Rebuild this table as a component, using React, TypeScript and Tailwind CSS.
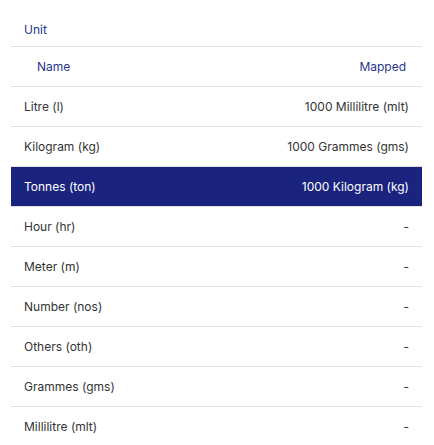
import React from "react";

const rows = [
  { name: "Litre (l)", mapped: "1000 Millilitre (mlt)" },
  { name: "Kilogram (kg)", mapped: "1000 Grammes (gms)" },
  { name: "Tonnes (ton)", mapped: "1000 Kilogram (kg)", active: true },
  { name: "Hour (hr)", mapped: "-" },
  { name: "Meter (m)", mapped: "-" },
  { name: "Number (nos)", mapped: "-" },
  { name: "Others (oth)", mapped: "-" },
  { name: "Grammes (gms)", mapped: "-" },
  { name: "Millilitre (mlt)", mapped: "-" },
];

const App = () => {
  return (
    <div
      className="w-[434px] h-[445px] overflow-hidden bg-white px-[11px] pt-[13px] text-[12px] text-[#333333]"
      style={{ fontFamily: "Inter, 'Noto Sans', sans-serif" }}
    >
      <div className="w-[411px]">
        <div className="h-[34px] flex items-center px-[13px] pt-[1px] border-b border-[#e0e0e0] text-[#283593]">
          Unit
        </div>
        <div className="h-[40px] flex items-center justify-between pl-[26px] pr-[16px] pt-[1px] border-b border-[#e0e0e0] text-[#283593]">
          <span>Name</span>
          <span>Mapped</span>
        </div>
        {rows.map((row) => (
          <div
            key={row.name}
            className={
              row.active
                ? "h-[40px] flex items-center justify-between px-[13px] pt-[1px] border-b border-[#e0e0e0] bg-[#1a237e] text-white"
                : "h-[40px] flex items-center justify-between px-[13px] pt-[1px] border-b border-[#e0e0e0]"
            }
          >
            <span>{row.name}</span>
            <span>{row.mapped}</span>
          </div>
        ))}
      </div>
    </div>
  );
};

export default App;
